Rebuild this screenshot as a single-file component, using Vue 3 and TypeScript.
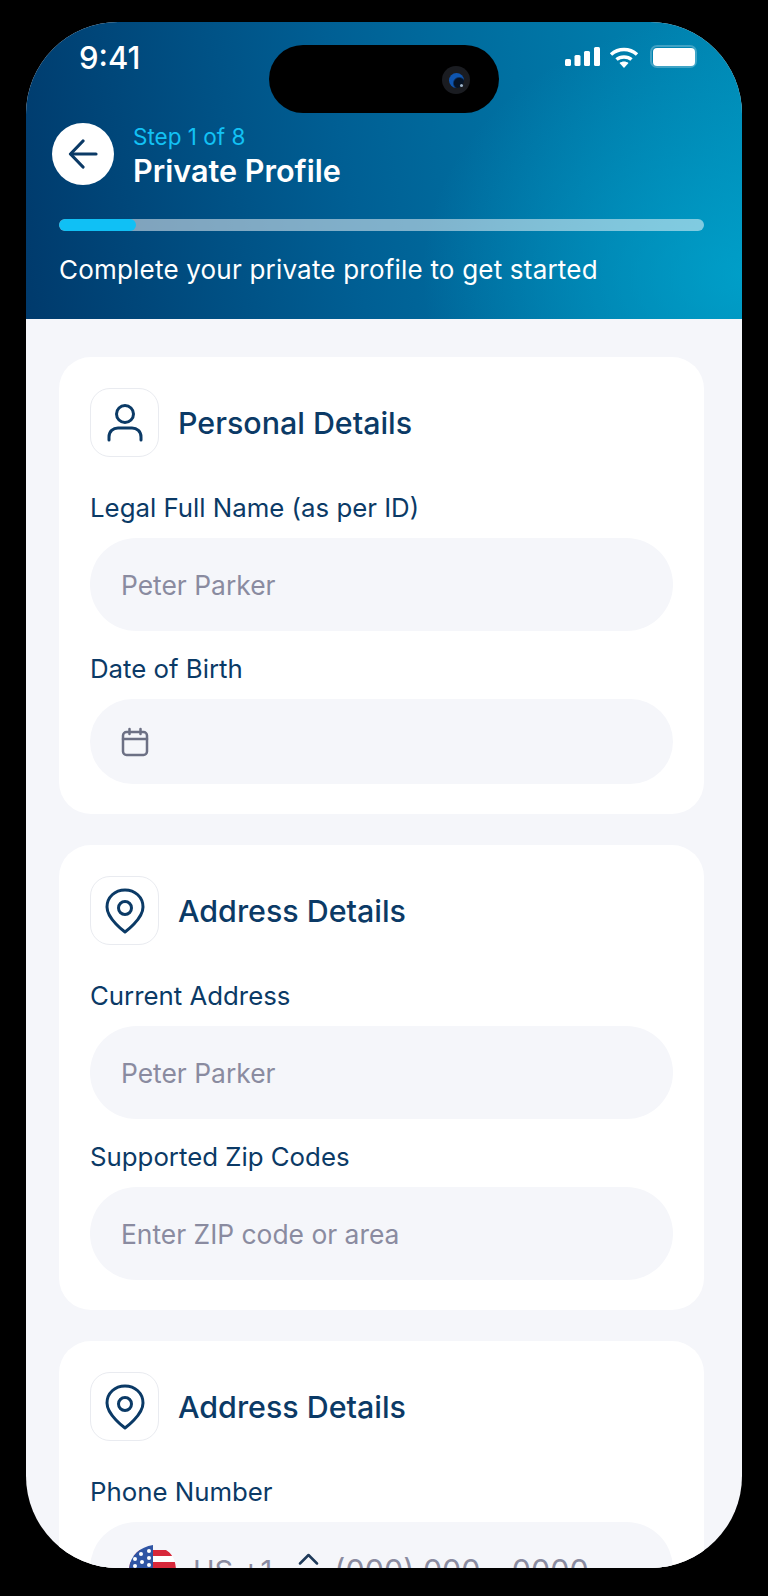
<script setup lang="ts">
interface Field { label: string; placeholder?: string; short?: boolean; calendar?: boolean }
interface Section { title: string; icon: 'user' | 'pin'; fields: Field[] }
const sections: Section[] = [
  { title: 'Personal Details', icon: 'user', fields: [
    { label: 'Legal Full Name (as per ID)', placeholder: 'Peter Parker' },
    { label: 'Date of Birth', short: true, calendar: true },
  ] },
  { title: 'Address Details', icon: 'pin', fields: [
    { label: 'Current Address', placeholder: 'Peter Parker' },
    { label: 'Supported Zip Codes', placeholder: 'Enter ZIP code or area' },
  ] },
]
</script>

<template>
  <div class="page">
    <div class="phone">
      <header class="header">
        <div class="status">
          <span class="time">9:41</span>
          <div class="status-icons">
            <svg width="35" height="19" viewBox="0 0 35 19" fill="#fff"><rect x="0" y="12" width="6" height="7" rx="1.500"/><rect x="9.500" y="8" width="6" height="11" rx="1.500"/><rect x="19" y="4" width="6" height="15" rx="1.500"/><rect x="29" y="0" width="6" height="19" rx="1.500"/></svg>
            <svg width="30" height="21" viewBox="0 0 30 21" fill="none" stroke="#fff" stroke-width="3.500"><path d="M2 7.500C9.500 .8 20.500 .8 28 7.500"/><path d="M7.500 12.500C11.500 9 18.500 9 22.500 12.500"/><path d="M15 21L10.500 16C13 14 17 14 19.500 16Z" fill="#fff" stroke="none"/></svg>
            <div class="battery"><div class="battery-fill"></div></div>
          </div>
        </div>
        <div class="island"><div class="camera"><div class="lens"></div></div></div>
        <div class="nav">
          <div class="back">
            <svg width="30" height="30" viewBox="0 0 30 30" fill="none" stroke="#0b3a66" stroke-width="3.200" stroke-linecap="round" stroke-linejoin="round"><path d="M28 15H3"/><path d="M15 2L2.500 15L15 28"/></svg>
          </div>
          <div class="nav-text">
            <div class="step">Step 1 of 8</div>
            <div class="title">Private Profile</div>
          </div>
        </div>
        <div class="progress"><div class="progress-fill"></div></div>
        <p class="subtitle">Complete your private profile to get started</p>
      </header>

      <main class="content">
        <section v-for="s in sections" :key="s.title + s.icon" class="card">
          <div class="card-head">
            <div class="icon-box">
              <svg v-if="s.icon === 'user'" width="36" height="38" viewBox="0 0 36 38" fill="none" stroke="#0b3a66" stroke-width="3" stroke-linecap="round"><circle cx="18" cy="10" r="8.500"/><path d="M2 36V33C2 27.500 6 24 11 24H25C30 24 34 27.500 34 33V36"/></svg>
              <svg v-else width="40" height="46" viewBox="0 0 40 46" fill="none" stroke="#0b3a66" stroke-width="3" stroke-linejoin="round"><path d="M20 44C20 44 38 31 38 19C38 9 30 2 20 2C10 2 2 9 2 19C2 31 20 44 20 44Z"/><circle cx="20" cy="20" r="6.500"/></svg>
            </div>
            <h2 class="card-title">{{ s.title }}</h2>
          </div>
          <div v-for="f in s.fields" :key="f.label" class="field">
            <label class="label">{{ f.label }}</label>
            <div class="input" :class="{ short: f.short }">
              <svg v-if="f.calendar" class="cal" width="28" height="30" viewBox="0 0 28 30" fill="none" stroke="#6c7084" stroke-width="2.500" stroke-linecap="round" stroke-linejoin="round"><rect x="2" y="5" width="24" height="23" rx="3.500"/><path d="M2 12H26M8.500 2V7M19.500 2V7"/></svg>
              <span v-else class="ph">{{ f.placeholder }}</span>
            </div>
          </div>
        </section>

        <section class="card">
          <div class="card-head">
            <div class="icon-box">
              <svg width="40" height="46" viewBox="0 0 40 46" fill="none" stroke="#0b3a66" stroke-width="3" stroke-linejoin="round"><path d="M20 44C20 44 38 31 38 19C38 9 30 2 20 2C10 2 2 9 2 19C2 31 20 44 20 44Z"/><circle cx="20" cy="20" r="6.500"/></svg>
            </div>
            <h2 class="card-title">Address Details</h2>
          </div>
          <div class="field">
            <label class="label">Phone Number</label>
            <div class="input phone-input">
              <svg class="flag" width="47" height="46" viewBox="0 0 47 46"><defs><clipPath id="flag-shape"><path d="M24 0C10 2 0 12 0 26C0 38 10 46 24 46C38 46 47 38 47 26C47 14 42 8 37 5H24Z"/></clipPath></defs><g clip-path="url(#flag-shape)"><rect width="47" height="46" fill="#fff"/><rect y="5" width="47" height="6" fill="#d8283a"/><rect y="17" width="47" height="6" fill="#d8283a"/><rect y="29" width="47" height="6" fill="#d8283a"/><rect width="24" height="29" fill="#2f55a4"/><g fill="#fff"><circle cx="20" cy="6" r="2"/><circle cx="12" cy="9" r="2"/><circle cx="20" cy="13" r="2"/><circle cx="6" cy="14" r="2"/><circle cx="13" cy="17" r="2"/><circle cx="20" cy="20" r="2"/><circle cx="6" cy="21" r="2"/></g></g></svg>
              <span class="ph ph-code">US +1</span>
              <svg class="caret" width="21" height="12" viewBox="0 0 21 12" fill="none" stroke="#1f3a5a" stroke-width="2.500" stroke-linecap="round" stroke-linejoin="round"><path d="M2 10.500L10.500 2L19 10.500"/></svg>
              <span class="ph ph-number">(000) 000 - 0000</span>
            </div>
          </div>
        </section>
      </main>
    </div>
  </div>
</template>

<style>
html, body { margin: 0; background: #000; }
</style>

<style scoped>
.page { width: 768px; height: 1596px; box-sizing: border-box; padding: 22px 26px 28px; background: #000; font-family: Inter, "Liberation Sans", sans-serif; }
.phone { position: relative; width: 716px; height: 1546px; overflow: hidden; border-radius: 92px; background: #f5f6fa; }
.header { position: relative; height: 297px; box-sizing: border-box; padding: 0 38px 0 33px; background: radial-gradient(ellipse 320px 260px at 100% 85%, rgba(0, 172, 212, .65), rgba(0, 172, 212, 0)), linear-gradient(82deg, #003a6c 0%, #005f94 45%, #0088b4 100%); color: #fff; }
.status { height: 78px; display: flex; justify-content: space-between; margin-right: 7px; padding: 17px 0 0 20px; box-sizing: border-box; }
.time { font-size: 31px; line-height: 38px; font-weight: 500; }
.status-icons { display: flex; align-items: flex-start; gap: 9px; padding-top: 8px; }
.battery { width: 47px; height: 23px; box-sizing: border-box; border: 2.500px solid rgba(255, 255, 255, .25); border-radius: 7px; padding: .5px; margin: -2px 0 0 2px; }
.battery-fill { height: 100%; background: #fff; border-radius: 4px; }
.island { position: absolute; left: 243px; top: 23px; width: 230px; height: 68px; border-radius: 34px; background: #000; }
.camera { position: absolute; left: 173px; top: 21px; width: 28px; height: 28px; border-radius: 50%; background: #1a1c21; display: flex; align-items: center; justify-content: center; }
.lens { position: relative; width: 15px; height: 15px; border-radius: 50%; background: radial-gradient(circle at 68% 68%, #061325 0 34%, #0e55b0 46% 100%); }
.lens::after { content: ""; position: absolute; right: 1px; bottom: 1px; width: 3px; height: 3px; border-radius: 50%; background: #9fb4c8; }
.nav { display: flex; align-items: flex-start; gap: 19px; margin-left: -7px; margin-top: 23px; }
.back { width: 62px; height: 62px; border-radius: 50%; background: #fff; display: flex; align-items: center; justify-content: center; }
.nav-text { display: flex; flex-direction: column; }
.step { font-size: 22.500px; line-height: 27px; color: #12c2f5; }
.title { font-size: 30.600px; line-height: 41px; font-weight: 600; color: #fff; }
.progress { height: 12px; margin-top: 28px; border-radius: 6px; background: rgba(255, 255, 255, .5); overflow: hidden; }
.progress-fill { width: 12%; height: 100%; background: #10c0f5; border-radius: 6px; }
.subtitle { margin: 23px 0 0; font-size: 26px; line-height: 32px; letter-spacing: .2px; color: #fff; }
.content { padding: 38px 38px 0 33px; display: flex; flex-direction: column; gap: 31px; }
.card { background: #fff; border-radius: 32px; padding: 31px 31px 30px; }
.card-head { display: flex; align-items: center; gap: 19px; margin-bottom: 34px; }
.icon-box { width: 69px; height: 69px; box-sizing: border-box; border: 1.500px solid #e9ebf0; border-radius: 20px; display: flex; align-items: center; justify-content: center; }
.card-title { margin: 1px 0 0; font-size: 30.400px; line-height: 38px; font-weight: 500; color: #0b3a66; }
.field { margin-top: 21px; }
.card-head + .field { margin-top: 0; }
.label { display: block; font-size: 25.800px; line-height: 34px; color: #0b3a66; margin-bottom: 13px; }
.input { height: 93px; border-radius: 46.500px; background: #f5f6fa; display: flex; align-items: center; padding: 0 31px; }
.input.short { height: 85px; }
.ph { font-size: 26.400px; color: #8a8ba0; white-space: nowrap; }
.phone-input { align-items: flex-start; padding: 23px 0 0 39px; }
.flag { flex: none; margin-right: 17px; }
.ph-code { font-size: 29px; line-height: 40px; margin-top: 6px; }
.ph-number { font-size: 30.500px; line-height: 40px; margin-top: 6px; }
.caret { flex: none; margin: 8px 15px 0 26px; }
</style>
